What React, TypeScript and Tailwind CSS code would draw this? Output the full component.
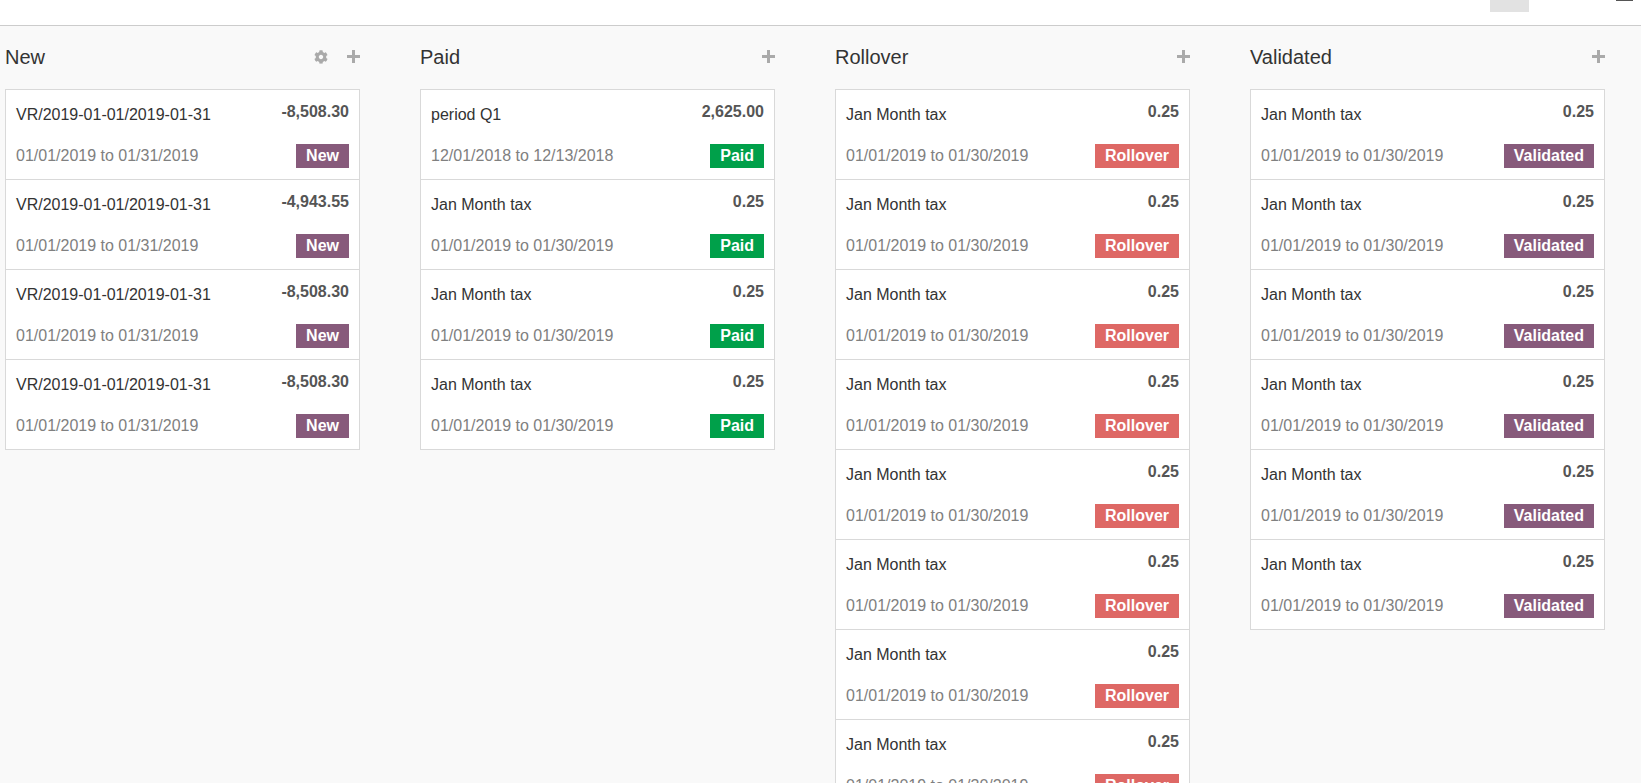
import { FaCog } from "react-icons/fa";

type Card = {
	name: string;
	amount: string;
	period: string;
};

type Column = {
	title: string;
	badge: string;
	badgeClass: string;
	gear?: boolean;
	cards: Card[];
};

const JAN: Card = { name: "Jan Month tax", amount: "0.25", period: "01/01/2019 to 01/30/2019" };

const COLUMNS: Column[] = [
	{
		title: "New",
		badge: "New",
		badgeClass: "bg-[#875a7b]",
		gear: true,
		cards: [
			{ name: "VR/2019-01-01/2019-01-31", amount: "-8,508.30", period: "01/01/2019 to 01/31/2019" },
			{ name: "VR/2019-01-01/2019-01-31", amount: "-4,943.55", period: "01/01/2019 to 01/31/2019" },
			{ name: "VR/2019-01-01/2019-01-31", amount: "-8,508.30", period: "01/01/2019 to 01/31/2019" },
			{ name: "VR/2019-01-01/2019-01-31", amount: "-8,508.30", period: "01/01/2019 to 01/31/2019" },
		],
	},
	{
		title: "Paid",
		badge: "Paid",
		badgeClass: "bg-[#00a04a]",
		cards: [
			{ name: "period Q1", amount: "2,625.00", period: "12/01/2018 to 12/13/2018" },
			JAN,
			JAN,
			JAN,
		],
	},
	{
		title: "Rollover",
		badge: "Rollover",
		badgeClass: "bg-[#de6865]",
		cards: [JAN, JAN, JAN, JAN, JAN, JAN, JAN, JAN],
	},
	{
		title: "Validated",
		badge: "Validated",
		badgeClass: "bg-[#875a7b]",
		cards: [JAN, JAN, JAN, JAN, JAN, JAN],
	},
];

function PlusIcon() {
	return (
		<svg width="13" height="13" viewBox="0 0 13 13" fill="currentColor">
			<rect x="0" y="5" width="13" height="3" />
			<rect x="5" y="0" width="3" height="13" />
		</svg>
	);
}

function KanbanCard({ card, badge, badgeClass, first }: { card: Card; badge: string; badgeClass: string; first: boolean }) {
	return (
		<div className={`bg-white px-[10px] pt-[10px] pb-[11px] ${first ? "" : "border-t border-[#d9d9d9]"}`}>
			<div className="flex justify-between h-[24px]">
				<span className="leading-[24px] pt-[3px] text-[#333]">{card.name}</span>
				<span className="leading-[24px] font-bold text-[#555]">{card.amount}</span>
			</div>
			<div className="flex justify-between items-center h-[24px] mt-[20px]">
				<span className="text-[#808080]">{card.period}</span>
				<span className={`h-[24px] leading-[24px] px-[10px] font-bold text-white ${badgeClass}`}>{badge}</span>
			</div>
		</div>
	);
}

export default function App() {
	return (
		<div className="h-screen overflow-hidden bg-[#f9f9f9] font-['Liberation_Sans',Arial,sans-serif] text-[16px]">
			<div className="h-[26px] bg-white border-b border-[#cccccc] flex items-start">
				<div className="w-[1490px]" />
				<div className="w-[39px] h-[12px] bg-[#e2e2e2]" />
				<div className="w-[87px]" />
				<div className="w-[17px] h-[1px] bg-[#555]" />
			</div>
			<div className="flex gap-[60px] pl-[5px]">
				{COLUMNS.map((col) => (
					<div key={col.title} className="w-[355px] shrink-0">
						<div className="h-[63px] pb-[2px] flex items-center justify-between">
							<span className="text-[20px] text-[#333]">{col.title}</span>
							<div className="flex items-center gap-[19px] text-[#aaaaaa]">
								{col.gear && <FaCog size={14} />}
								<PlusIcon />
							</div>
						</div>
						<div className="border border-[#d9d9d9]">
							{col.cards.map((card, i) => (
								<KanbanCard
									key={i}
									card={card}
									badge={col.badge}
									badgeClass={col.badgeClass}
									first={i === 0}
								/>
							))}
						</div>
					</div>
				))}
			</div>
		</div>
	);
}
